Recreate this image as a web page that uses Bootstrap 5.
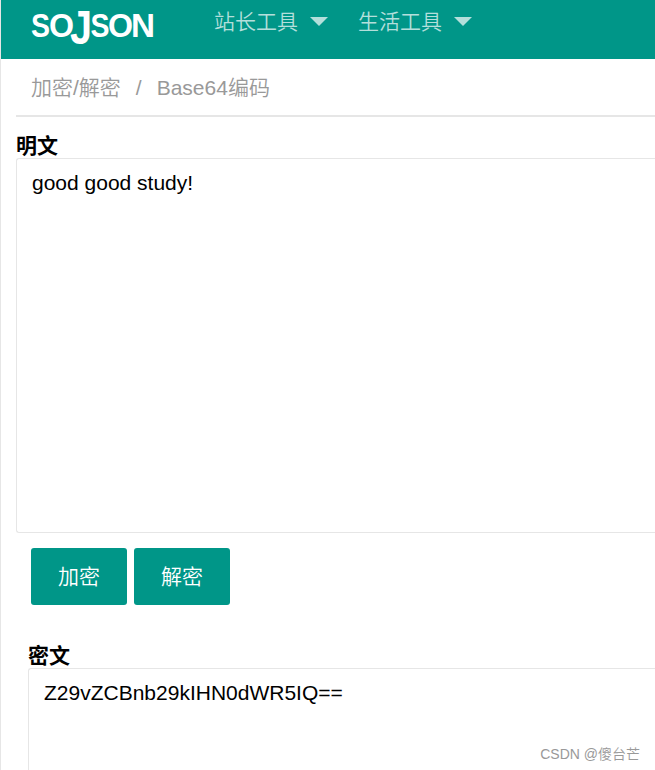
<!DOCTYPE html>
<html lang="zh-CN">
<head>
<meta charset="utf-8">
<meta name="viewport" content="width=device-width, initial-scale=1">
<title>Base64编码 - SOJSON</title>
<link href="https://cdn.jsdelivr.net/npm/bootstrap@5.3.0/dist/css/bootstrap.min.css" rel="stylesheet">
<style>
body{font:21px/30px "Liberation Sans","Noto Sans CJK SC",sans-serif;color:#000;background:#fff}
.page{height:770px;border-left:1px solid #e6e6e6}
.topbar{height:59px;background:#009688;padding-left:30px}
.brand{width:123px;height:48px;margin-right:60px;overflow:visible}
.brand text{fill:#fff;font-family:"Liberation Sans",sans-serif;font-weight:700}
.topbar a{color:#b3dfdb;height:43px;line-height:43px;margin-right:30px;font-weight:350}
.tri{width:18px;height:9px;margin-left:12px;fill:#b3dfdb}
.crumbs{height:58px;margin-left:15px;padding-left:15px;border-bottom:2px solid #e6e6e6;line-height:58px;color:#999;font-weight:350}
.crumbs .sep{margin:0 15px}
.field-title{font-weight:700;line-height:26px;height:25px}
.plain{margin:16px 0 0 15px}
.cipher{margin:38px 0 0 27px}
.box{border:1px solid #e6e6e6;border-right:0;border-radius:3px 0 0 3px;padding:9px 15px;resize:none;outline:0;line-height:30px;color:#000;background:#fff}
.plain .box{height:375px}
.cipher .box{height:102px;border-bottom:0;border-bottom-left-radius:0}
.actions{margin:15px 0 0 30px;gap:7px}
.actions .btn{width:96px;height:57px;padding:0;border:0;border-radius:3px;background:#009688;color:#fff;font-size:21px;font-weight:350}
.credit{right:15px;bottom:6px;font-size:14px;line-height:20px;color:#999;font-weight:350}
</style>
</head>
<body>
<div class="page position-relative overflow-hidden">
  <header class="topbar d-flex align-items-start">
    <svg class="brand" viewBox="0 0 123 48" role="img" aria-label="SOJSON">
      <g font-size="34">
        <text x="0" y="36.500" textLength="19" lengthAdjust="spacingAndGlyphs">S</text>
        <text x="18" y="36.500" textLength="25" lengthAdjust="spacingAndGlyphs">O</text>
        <text x="39" y="44" font-size="48" textLength="22" lengthAdjust="spacingAndGlyphs">J</text>
        <text x="59.500" y="36.500" textLength="19" lengthAdjust="spacingAndGlyphs">S</text>
        <text x="77" y="36.500" textLength="25" lengthAdjust="spacingAndGlyphs">O</text>
        <text x="100" y="36.500" textLength="24" lengthAdjust="spacingAndGlyphs">N</text>
      </g>
    </svg>
    <a class="d-flex align-items-center text-decoration-none" href="#">站长工具<svg class="tri" viewBox="0 0 18 9"><path d="M0 0h18L9 9z"/></svg></a>
    <a class="d-flex align-items-center text-decoration-none" href="#">生活工具<svg class="tri" viewBox="0 0 18 9"><path d="M0 0h18L9 9z"/></svg></a>
  </header>
  <nav class="crumbs d-flex"><span>加密/解密</span><span class="sep">/</span><span>Base64编码</span></nav>
  <main>
    <section class="plain">
      <div class="field-title">明文</div>
      <textarea class="box d-block w-100" spellcheck="false">good good study!</textarea>
    </section>
    <div class="actions d-flex">
      <button class="btn" type="button">加密</button>
      <button class="btn" type="button">解密</button>
    </div>
    <section class="cipher">
      <div class="field-title">密文</div>
      <textarea class="box d-block w-100" spellcheck="false">Z29vZCBnb29kIHN0dWR5IQ==</textarea>
    </section>
  </main>
  <div class="credit position-absolute">CSDN @傻台芒</div>
</div>
<script src="https://cdn.jsdelivr.net/npm/bootstrap@5.3.0/dist/js/bootstrap.bundle.min.js"></script>
</body>
</html>
